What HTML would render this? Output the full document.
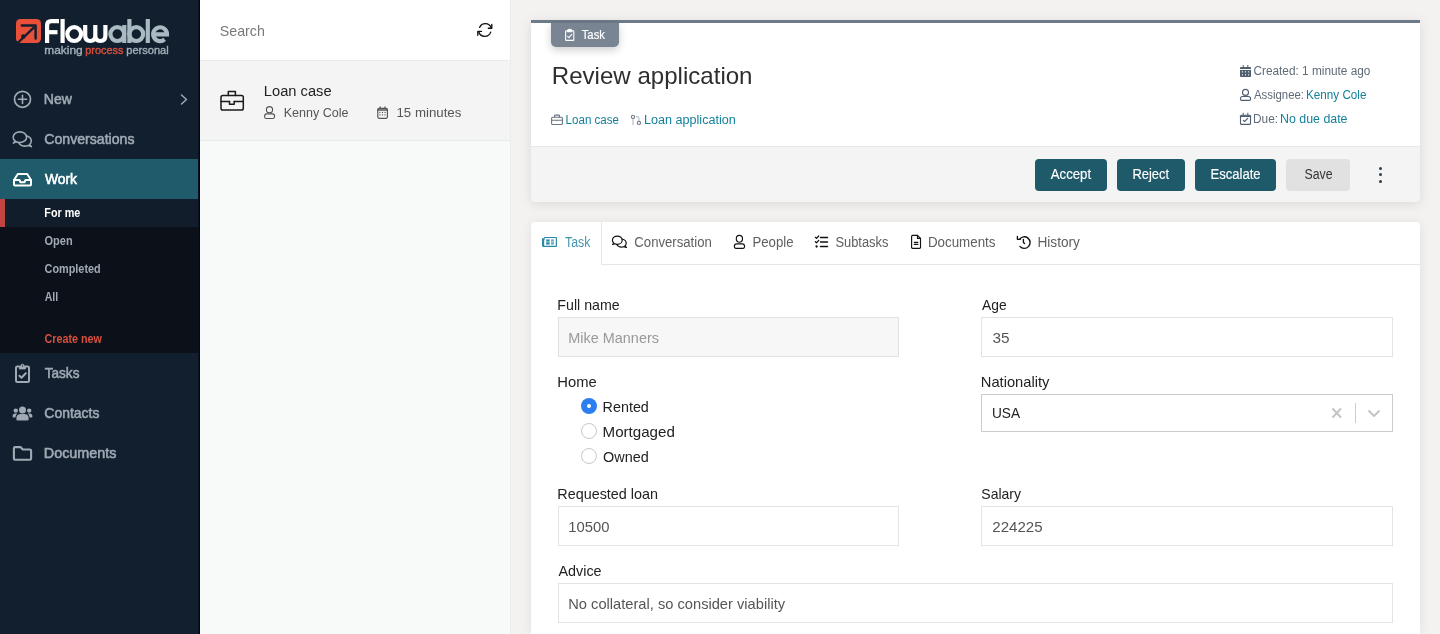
<!DOCTYPE html>
<html><head><meta charset="utf-8"><style>
html,body{margin:0;padding:0;width:1440px;height:634px;overflow:hidden;background:#f3f2f0}
body{position:relative;font-family:"Liberation Sans",sans-serif}
.r{position:absolute}
.t{position:absolute;white-space:nowrap;will-change:transform}
svg{position:absolute;overflow:visible}
</style></head><body>
<div class="r" style="left:0px;top:0px;width:198px;height:634px;background:#121f2e"></div>
<div class="r" style="left:198px;top:0px;width:1px;height:634px;background:#0a1222"></div>
<div class="r" style="left:199px;top:0px;width:1px;height:634px;background:#020616"></div>
<div class="r" style="left:0px;top:159px;width:198px;height:40px;background:#1f5b6b"></div>
<div class="r" style="left:0px;top:199px;width:198px;height:154px;background:#0c1119"></div>
<div class="r" style="left:0px;top:199px;width:198px;height:28px;background:#111d2b"></div>
<div class="r" style="left:0px;top:199px;width:5px;height:28px;background:#c0443f"></div>
<div class="r" style="left:200px;top:0px;width:310px;height:634px;background:#f8f9f9"></div>
<div class="r" style="left:200px;top:0px;width:310px;height:60px;background:#ffffff"></div>
<div class="r" style="left:200px;top:60px;width:310px;height:1px;background:#e7ebeb"></div>
<div class="r" style="left:200px;top:61px;width:310px;height:79px;background:#f4f4f4"></div>
<div class="r" style="left:200px;top:140px;width:310px;height:1px;background:#e7ebeb"></div>
<div class="r" style="left:510px;top:0px;width:1px;height:634px;background:#e9eded"></div>
<div class="r" style="left:511px;top:0px;width:929px;height:634px;background:#f3f2f0"></div>
<div class="r" style="left:531px;top:20px;width:889px;height:182px;background:#f4f4f4;border-radius:0 0 4px 4px;box-shadow:0 2px 12px rgba(0,0,0,0.10)"></div>
<div class="r" style="left:531px;top:23px;width:889px;height:123px;background:#ffffff"></div>
<div class="r" style="left:531px;top:20px;width:889px;height:3px;background:#6d7a88"></div>
<div class="r" style="left:531px;top:146px;width:889px;height:1px;background:#e6eaea"></div>
<div class="r" style="left:551px;top:23px;width:68px;height:24px;background:#7a8593;border-radius:0 0 5px 5px;box-shadow:0 3px 8px rgba(0,0,0,0.2)"></div>
<div class="r" style="left:1035px;top:159px;width:72px;height:32px;background:#1f5a6b;border-radius:4px"></div>
<div class="r" style="left:1117px;top:159px;width:68px;height:32px;background:#1f5a6b;border-radius:4px"></div>
<div class="r" style="left:1195px;top:159px;width:81px;height:32px;background:#1f5a6b;border-radius:4px"></div>
<div class="r" style="left:1286px;top:159px;width:64px;height:32px;background:#e1e1e1;border-radius:4px"></div>
<div class="r" style="left:1378.5px;top:166.5px;width:3px;height:3px;background:#2c3e50;border-radius:50%"></div>
<div class="r" style="left:1378.5px;top:173.0px;width:3px;height:3px;background:#2c3e50;border-radius:50%"></div>
<div class="r" style="left:1378.5px;top:179.5px;width:3px;height:3px;background:#2c3e50;border-radius:50%"></div>
<div class="r" style="left:531px;top:222px;width:889px;height:412px;background:#ffffff;border-radius:4px 4px 0 0;box-shadow:0 1px 12px rgba(0,0,0,0.08)"></div>
<div class="r" style="left:601px;top:222px;width:1px;height:42px;background:#e6e6e6"></div>
<div class="r" style="left:601px;top:264px;width:819px;height:1px;background:#e6e6e6"></div>
<div class="r" style="left:558px;top:317px;width:341px;height:40px;box-sizing:border-box;background:#f7f7f7;border:1px solid #e0e0e0"></div>
<div class="r" style="left:981px;top:317px;width:412px;height:40px;box-sizing:border-box;background:#fff;border:1px solid #e3e3e3"></div>
<div class="r" style="left:981px;top:394px;width:412px;height:38px;box-sizing:border-box;background:#fff;border:1px solid #cccccc"></div>
<div class="r" style="left:558px;top:506px;width:341px;height:40px;box-sizing:border-box;background:#fff;border:1px solid #e3e3e3"></div>
<div class="r" style="left:981px;top:506px;width:412px;height:40px;box-sizing:border-box;background:#fff;border:1px solid #e3e3e3"></div>
<div class="r" style="left:558px;top:583px;width:835px;height:40px;box-sizing:border-box;background:#fff;border:1px solid #e3e3e3"></div>
<div class="r" style="left:581px;top:398px;width:16px;height:16px;box-sizing:border-box;background:#2b7ff0;border-radius:50%"></div>
<div class="r" style="left:587px;top:404px;width:4px;height:4px;background:#fff;border-radius:50%"></div>
<div class="r" style="left:581px;top:423px;width:16px;height:16px;box-sizing:border-box;background:#fff;border:1px solid #c8c8c8;border-radius:50%"></div>
<div class="r" style="left:581px;top:448px;width:16px;height:16px;box-sizing:border-box;background:#fff;border:1px solid #c8c8c8;border-radius:50%"></div>
<svg style="left:0;top:0;will-change:transform" width="1440" height="634" font-family="Liberation Sans"><text x="43.83" y="104" font-size="14.5" fill="#a0aab5" textLength="28.17" lengthAdjust="spacingAndGlyphs" stroke="#a0aab5" stroke-width="0.55">New</text><text x="44.32" y="144" font-size="14.5" fill="#a0aab5" textLength="90.15" lengthAdjust="spacingAndGlyphs" stroke="#a0aab5" stroke-width="0.55">Conversations</text><text x="44.90" y="184" font-size="14.5" fill="#ffffff" textLength="32.06" lengthAdjust="spacingAndGlyphs" stroke="#ffffff" stroke-width="0.6">Work</text><text x="44.31" y="217" font-size="12.5" fill="#ffffff" font-weight="bold" textLength="36.10" lengthAdjust="spacingAndGlyphs">For me</text><text x="44.56" y="245" font-size="12.5" fill="#a0aab5" font-weight="bold" textLength="28.10" lengthAdjust="spacingAndGlyphs">Open</text><text x="44.57" y="273" font-size="12.5" fill="#a0aab5" font-weight="bold" textLength="56.12" lengthAdjust="spacingAndGlyphs">Completed</text><text x="44.75" y="301" font-size="12.5" fill="#a0aab5" font-weight="bold" textLength="13.49" lengthAdjust="spacingAndGlyphs">All</text><text x="44.57" y="343" font-size="12.5" fill="#d6503e" font-weight="bold" textLength="57.34" lengthAdjust="spacingAndGlyphs">Create new</text><text x="44.72" y="378" font-size="14.5" fill="#a0aab5" textLength="34.72" lengthAdjust="spacingAndGlyphs" stroke="#a0aab5" stroke-width="0.55">Tasks</text><text x="44.33" y="418" font-size="14.5" fill="#a0aab5" textLength="55.08" lengthAdjust="spacingAndGlyphs" stroke="#a0aab5" stroke-width="0.55">Contacts</text><text x="43.81" y="458" font-size="14.5" fill="#a0aab5" textLength="72.62" lengthAdjust="spacingAndGlyphs" stroke="#a0aab5" stroke-width="0.55">Documents</text><text x="44.20" y="54" font-size="10.5" fill="#a3afb8" textLength="38.53" lengthAdjust="spacingAndGlyphs" stroke="#a3afb8" stroke-width="0.35">making</text><text x="85.27" y="54" font-size="10.5" fill="#d8503f" textLength="38.10" lengthAdjust="spacingAndGlyphs" stroke="#d8503f" stroke-width="0.35">process</text><text x="126.26" y="54" font-size="10.5" fill="#a3afb8" textLength="42.45" lengthAdjust="spacingAndGlyphs" stroke="#a3afb8" stroke-width="0.35">personal</text><text x="219.81" y="36" font-size="14.5" fill="#7a7a7a" textLength="45.11" lengthAdjust="spacingAndGlyphs">Search</text><text x="263.86" y="96" font-size="15.5" fill="#222222" textLength="67.73" lengthAdjust="spacingAndGlyphs">Loan case</text><text x="283.78" y="117" font-size="13.5" fill="#555555" textLength="64.77" lengthAdjust="spacingAndGlyphs">Kenny Cole</text><text x="396.48" y="117" font-size="13" fill="#555555" textLength="64.92" lengthAdjust="spacingAndGlyphs">15 minutes</text><text x="581.73" y="39" font-size="12.5" fill="#ffffff" textLength="23.18" lengthAdjust="spacingAndGlyphs" stroke="#ffffff" stroke-width="0.2">Task</text><text x="551.79" y="84" font-size="24" fill="#2e2e2e" textLength="200.73" lengthAdjust="spacingAndGlyphs">Review application</text><text x="565.57" y="124" font-size="12.5" fill="#13809b" textLength="53.47" lengthAdjust="spacingAndGlyphs">Loan case</text><text x="643.99" y="124" font-size="12.5" fill="#13809b" textLength="91.76" lengthAdjust="spacingAndGlyphs">Loan application</text><text x="1253.43" y="75" font-size="12.5" fill="#5f6b78" textLength="117.03" lengthAdjust="spacingAndGlyphs">Created: 1 minute ago</text><text x="1254.00" y="99" font-size="12.5" fill="#5f6b78" textLength="50.00" lengthAdjust="spacingAndGlyphs">Assignee:</text><text x="1306.06" y="99" font-size="12.5" fill="#13809b" textLength="60.42" lengthAdjust="spacingAndGlyphs">Kenny Cole</text><text x="1253.05" y="123" font-size="12.5" fill="#5f6b78" textLength="24.99" lengthAdjust="spacingAndGlyphs">Due:</text><text x="1280.01" y="123" font-size="12.5" fill="#13809b" textLength="67.49" lengthAdjust="spacingAndGlyphs">No due date</text><text x="1050.80" y="179" font-size="14" fill="#ffffff" textLength="40.29" lengthAdjust="spacingAndGlyphs" stroke="#ffffff" stroke-width="0.15">Accept</text><text x="1132.49" y="179" font-size="14" fill="#ffffff" textLength="36.59" lengthAdjust="spacingAndGlyphs" stroke="#ffffff" stroke-width="0.15">Reject</text><text x="1210.47" y="179" font-size="14" fill="#ffffff" textLength="50.08" lengthAdjust="spacingAndGlyphs" stroke="#ffffff" stroke-width="0.15">Escalate</text><text x="1304.47" y="179" font-size="14" fill="#333333" textLength="28.06" lengthAdjust="spacingAndGlyphs">Save</text><text x="565.04" y="247" font-size="14" fill="#4596ae" textLength="25.25" lengthAdjust="spacingAndGlyphs">Task</text><text x="634.34" y="247" font-size="14" fill="#606060" textLength="77.49" lengthAdjust="spacingAndGlyphs">Conversation</text><text x="752.46" y="247" font-size="14" fill="#606060" textLength="41.10" lengthAdjust="spacingAndGlyphs">People</text><text x="835.45" y="247" font-size="14" fill="#606060" textLength="53.00" lengthAdjust="spacingAndGlyphs">Subtasks</text><text x="927.95" y="247" font-size="14" fill="#606060" textLength="67.53" lengthAdjust="spacingAndGlyphs">Documents</text><text x="1037.43" y="247" font-size="14" fill="#606060" textLength="42.53" lengthAdjust="spacingAndGlyphs">History</text><text x="557.33" y="310" font-size="14.5" fill="#222222" textLength="62.32" lengthAdjust="spacingAndGlyphs">Full name</text><text x="982.00" y="310" font-size="14.5" fill="#222222" textLength="24.67" lengthAdjust="spacingAndGlyphs">Age</text><text x="568.31" y="343" font-size="14.5" fill="#999999" textLength="90.65" lengthAdjust="spacingAndGlyphs">Mike Manners</text><text x="992.47" y="343" font-size="14.5" fill="#555555" textLength="17.09" lengthAdjust="spacingAndGlyphs">35</text><text x="557.28" y="387" font-size="14.5" fill="#222222" textLength="39.41" lengthAdjust="spacingAndGlyphs">Home</text><text x="980.78" y="387" font-size="14.5" fill="#222222" textLength="68.72" lengthAdjust="spacingAndGlyphs">Nationality</text><text x="602.61" y="412" font-size="14.5" fill="#222222" textLength="46.23" lengthAdjust="spacingAndGlyphs">Rented</text><text x="602.55" y="437" font-size="14.5" fill="#222222" textLength="72.31" lengthAdjust="spacingAndGlyphs">Mortgaged</text><text x="603.10" y="462" font-size="14.5" fill="#222222" textLength="45.74" lengthAdjust="spacingAndGlyphs">Owned</text><text x="991.96" y="418" font-size="14.5" fill="#222222" textLength="28.15" lengthAdjust="spacingAndGlyphs">USA</text><text x="557.31" y="499" font-size="14.5" fill="#222222" textLength="100.66" lengthAdjust="spacingAndGlyphs">Requested loan</text><text x="981.32" y="499" font-size="14.5" fill="#222222" textLength="39.68" lengthAdjust="spacingAndGlyphs">Salary</text><text x="568.38" y="532" font-size="14.5" fill="#555555" textLength="41.15" lengthAdjust="spacingAndGlyphs">10500</text><text x="992.27" y="532" font-size="14.5" fill="#555555" textLength="50.34" lengthAdjust="spacingAndGlyphs">224225</text><text x="558.50" y="576" font-size="14.5" fill="#222222" textLength="43.12" lengthAdjust="spacingAndGlyphs">Advice</text><text x="568.29" y="609" font-size="14.5" fill="#555555" textLength="216.78" lengthAdjust="spacingAndGlyphs">No collateral, so consider viability</text></svg>
<svg style="left:0;top:0" width="1440" height="634" viewBox="0 0 1440 634" fill="none" stroke-linecap="round" stroke-linejoin="round">
<!-- logo icon -->
<rect x="16" y="19" width="25" height="24" rx="4.5" fill="#e9503a"/>
<path d="M14,45 L17.5,41.5 L16,41.5 Z" fill="#121f2e"/>
<path d="M21.8,25.6 H35.6 V38.4" stroke="#121f2e" stroke-width="2.5" stroke-linecap="round"/>
<path d="M34.5,26.8 L14.5,46" stroke="#121f2e" stroke-width="2.3" stroke-linecap="butt"/>
<circle cx="23.3" cy="36.6" r="2.3" fill="#121f2e"/>
<!-- Flowable letters -->
<g stroke-width="4.2" stroke-linecap="butt" stroke-linejoin="miter">
<path d="M47.1,43 V25.3 Q47.1,21.1 51.3,21.1 H59" stroke="#ffffff"/>
<path d="M47.1,32.2 H57.5" stroke="#ffffff"/>
<path d="M62.6,19 V43" stroke="#ffffff"/>
<circle cx="74.2" cy="34.1" r="6.9" stroke="#ffffff"/>
<path d="M85.2,25 V35.5 Q85.2,41 90.3,41 Q95.3,41 95.3,35.5 V25 M95.3,35.5 Q95.3,41 100.4,41 Q105.4,41 105.4,35.5 V25" stroke="#ffffff"/>
<circle cx="117.3" cy="34.1" r="6.9" stroke="#aabac2"/>
<path d="M124.3,25 V43" stroke="#aabac2"/>
<path d="M129.4,19 V43" stroke="#aabac2"/>
<circle cx="136.3" cy="34.1" r="6.9" stroke="#aabac2"/>
<path d="M147.8,19 V43" stroke="#aabac2"/>
<path d="M153.3,34.3 H167 A6.9,6.9 0 1 0 164.6,39.4" stroke="#aabac2"/>
</g>
<!-- New plus circle -->
<circle cx="22.5" cy="99.3" r="8" stroke="#a0aab5" stroke-width="1.7"/>
<path d="M18.4,99.3 H26.6 M22.5,95.2 V103.4" stroke="#a0aab5" stroke-width="1.6"/>
<!-- chevron -->
<path d="M181.5,95 L186.5,99.5 L181.5,104" stroke="#a0aab5" stroke-width="1.5"/>
<!-- conversations -->
<g stroke="#a0aab5" stroke-width="1.6">
<path d="M15.4,141.2 C13.9,140.2 13.2,138.8 13.2,137.2 C13.2,134.2 16.2,131.9 19.9,131.9 C23.6,131.9 26.6,134.2 26.6,137.2 C26.6,140.2 23.6,142.5 19.9,142.5 C18.5,142.5 17.2,142.2 16.1,141.7 L13.4,143.1 Z"/>
<path d="M26.3,135.7 C29.2,136.4 31.3,138.5 31.3,141 C31.3,142.5 30.6,143.8 29.5,144.7 L31.4,146.6 L28.2,145.5 C27.3,145.9 26.2,146.1 25,146.1 C22.3,146.1 20,144.9 19.1,143.1"/>
</g>
<!-- work inbox -->
<g stroke="#ffffff" stroke-width="2">
<path d="M14,180 L17.8,174 H27.2 L31,180 V184.6 Q31,185.6 30,185.6 H15 Q14,185.6 14,184.6 Z"/>
<path d="M14,180 H19.5 L20.5,182.3 H24.5 L25.5,180 H31"/>
</g>
<!-- tasks clipboard -->
<g stroke="#a0aab5" stroke-width="2">
<path d="M19.2,366.6 H17.2 Q16,366.6 16,367.8 V380.8 Q16,382 17.2,382 H27.8 Q29,382 29,380.8 V367.8 Q29,366.6 27.8,366.6 H25.6"/>
<path d="M19.6,368.9 H25.4 V366.9 Q25.4,366.1 24.6,366.1 H24.2 Q24,364.2 22.5,364.2 Q21,364.2 20.8,366.1 H20.4 Q19.6,366.1 19.6,366.9 Z" fill="#a0aab5" stroke-width="1"/><circle cx="22.5" cy="365.9" r="0.55" fill="#121f2e" stroke="none"/>
<path d="M19.4,375.8 L21.5,377.8 L25.8,373.2" stroke-width="2"/>
</g>
<!-- contacts -->
<g fill="#a0aab5">
<circle cx="22.5" cy="410" r="3.5"/>
<path d="M16.4,419.2 V417.9 C16.4,415.6 18.2,414.1 20.5,414.1 H24.5 C26.8,414.1 28.6,415.6 28.6,417.9 V419.2 Q28.6,420.4 27.4,420.4 H17.6 Q16.4,420.4 16.4,419.2 Z"/>
<circle cx="15.8" cy="410.6" r="2.2"/>
<circle cx="29.2" cy="410.6" r="2.2"/>
<path d="M12.6,416.6 V416.1 C12.6,414.6 13.6,413.5 15.1,413.5 H17.4 C16.3,414.5 15.6,415.9 15.5,417.5 H13.5 Q12.6,417.5 12.6,416.6 Z"/>
<path d="M32.4,416.6 V416.1 C32.4,414.6 31.4,413.5 29.9,413.5 H27.6 C28.7,414.5 29.4,415.9 29.5,417.5 H31.5 Q32.4,417.5 32.4,416.6 Z"/>
</g>
<!-- documents folder -->
<path d="M13.9,458.8 V448.3 Q13.9,447.1 15.1,447.1 H20.5 L22.8,449.5 H29.9 Q31.1,449.5 31.1,450.7 V458.6 Q31.1,459.8 29.9,459.8 H15.1 Q13.9,459.8 13.9,458.8 Z" stroke="#a0aab5" stroke-width="2.1"/>
<!-- refresh -->
<g stroke="#111" stroke-width="1.35">
<path d="M479.6,27.4 A6.3,6.3 0 0 1 491.2,27.6"/>
<path d="M491.8,24.4 V28.2 H488.3"/>
<path d="M490.7,32.1 A6.3,6.3 0 0 1 478.7,31.8"/>
<path d="M477.8,35.3 V31.4 H481.5"/>
</g>
<!-- briefcase big -->
<g stroke="#1a1a1a" stroke-width="1.5">
<rect x="221" y="95.5" width="22.3" height="14.6" rx="1.8"/>
<path d="M228.3,95.5 V91.6 H235.4 V95.5"/>
<path d="M221,101.6 H229.5 M234.2,101.6 H243.3"/>
<path d="M229.5,101.6 V104.2 H234.2 V101.6"/>
</g>
<!-- person small list -->
<g stroke="#555" stroke-width="1.15">
<circle cx="269.5" cy="109.7" r="3.1"/>
<path d="M266.6,113.9 H272.4 Q274.6,113.9 274.6,116.6 Q274.6,118.5 273,118.5 H266 Q264.6,118.5 264.6,116.6 Q264.6,113.9 266.6,113.9 Z"/>
</g>
<!-- calendar list -->
<g stroke="#555">
<rect x="377.8" y="108.4" width="9.6" height="9.9" rx="1.2" stroke-width="1.15"/>
<path d="M377.8,109.9 H387.4" stroke-width="1.5"/>
<path d="M380.2,106.6 V108.6 M385,106.6 V108.6" stroke-width="1.2" stroke-linecap="butt"/>
</g>
<g fill="#555">
<rect x="379.4" y="111.9" width="1.1" height="1.1"/><rect x="381.95" y="111.9" width="1.1" height="1.1"/><rect x="384.5" y="111.9" width="1.1" height="1.1"/>
<rect x="379.4" y="114.3" width="1.1" height="1.1"/><rect x="381.95" y="114.3" width="1.1" height="1.1"/><rect x="384.5" y="114.3" width="1.1" height="1.1"/>
</g>
<!-- badge clipboard -->
<g stroke="#ffffff" stroke-width="1.1">
<path d="M567.4,30.8 H566.3 Q565.6,30.8 565.6,31.5 V39.7 Q565.6,40.4 566.3,40.4 H573.1 Q573.8,40.4 573.8,39.7 V31.5 Q573.8,30.8 573.1,30.8 H572"/>
<path d="M567.6,31.8 V30.6 Q567.6,29.3 569.7,29.3 Q571.8,29.3 571.8,30.6 V31.8 Z" fill="#ffffff"/>
<path d="M567.6,36.4 L568.9,37.6 L571.8,34.4"/>
</g>
<!-- small briefcase -->
<g stroke="#6b7784" stroke-width="1.1">
<rect x="551.6" y="117.2" width="10.8" height="7.3" rx="1"/>
<path d="M554.6,117.2 V115.6 Q554.6,115.1 555.1,115.1 H558.9 Q559.4,115.1 559.4,115.6 V117.2"/>
<path d="M551.6,120.3 H562.4"/>
</g>
<path d="M556,120.6 H558 L557,121.6 Z" fill="#6b7784"/>
<!-- process icon -->
<path d="M633,118.6 V124.6" stroke="#b9c0c7" stroke-width="1.2"/>
<path d="M636.4,116.6 H637.4 Q638.9,116.6 638.9,118.1 V121.2" stroke="#b9c0c7" stroke-width="1.2"/>
<circle cx="633" cy="116.9" r="1.6" stroke="#6b7784" stroke-width="1.1"/>
<circle cx="638.9" cy="122.9" r="1.6" stroke="#6b7784" stroke-width="1.1"/>
<!-- meta calendar filled -->
<g fill="#4f5f6f">
<path d="M1240,68 Q1240,67 1241,67 H1250 Q1251,67 1251,68 V69 H1240 Z"/>
<path d="M1240,70 H1251 V76 Q1251,77 1250,77 H1241 Q1240,77 1240,76 Z"/>
<rect x="1242.7" y="65" width="1" height="2.2"/><rect x="1247.3" y="65" width="1" height="2.2"/>
</g>
<g fill="#ffffff">
<rect x="1241.9" y="71.3" width="1.1" height="1.1"/><rect x="1245" y="71.3" width="1.1" height="1.1"/><rect x="1248.1" y="71.3" width="1.1" height="1.1"/>
<rect x="1241.9" y="74.3" width="1.1" height="1.1"/><rect x="1245" y="74.3" width="1.1" height="1.1"/><rect x="1248.1" y="74.3" width="1.1" height="1.1"/>
</g>
<!-- meta person -->
<g stroke="#4f5f6f" stroke-width="1.1">
<circle cx="1245.5" cy="92.4" r="3"/>
<path d="M1242.6,96.5 H1248.4 Q1250.6,96.5 1250.6,99 Q1250.6,100.4 1249.3,100.4 H1241.7 Q1240.4,100.4 1240.4,99 Q1240.4,96.5 1242.6,96.5 Z"/>
</g>
<!-- meta calendar check -->
<g stroke="#4f5f6f" stroke-width="1.1">
<rect x="1240.5" y="115.2" width="10" height="9.2" rx="1"/>
<path d="M1240.5,116.2 H1250.5" stroke-width="1.5"/>
<path d="M1243.2,113.2 V115 M1247.8,113.2 V115" stroke-width="1"/>
<path d="M1243.2,120.3 L1244.6,121.5 L1247.7,118.4"/>
</g>
<!-- tab task icon -->
<g stroke="#2a8aa6" stroke-width="1.2">
<path d="M544.6,237.5 H556 Q556.4,237.5 556.4,237.9 V245.9 Q556.4,246.4 556,246.4 H543.5 Q542.6,246.4 542.6,245.5 V238.8 H544.6"/>
<path d="M543.6,238.8 V246"/>
</g>
<g fill="#2a8aa6">
<rect x="546.2" y="239.4" width="3.4" height="2.2"/>
<rect x="546.2" y="242.2" width="3.4" height="2.4"/>
<rect x="551" y="239.4" width="3" height="2.2" opacity="0.7"/>
<rect x="551" y="242.2" width="3" height="2.4" opacity="0.7"/>
</g>
<!-- tab conversation -->
<g stroke="#111" stroke-width="1.2">
<path d="M613.9,243.2 C613,242.4 612.4,241.4 612.4,240.2 C612.4,237.9 614.6,236.1 617.3,236.1 C620,236.1 622.2,237.9 622.2,240.2 C622.2,242.5 620,244.3 617.3,244.3 C616.3,244.3 615.4,244.1 614.7,243.8 L612.6,244.5 Z"/>
<path d="M622.1,239 C624.5,239.5 626.2,241.2 626.2,243.2 C626.2,244.3 625.7,245.2 624.9,246 L626.4,247.5 L623.7,246.7 C623,247 622.2,247.1 621.4,247.1 C619.3,247.1 617.6,246.2 616.8,244.6"/>
</g>
<!-- tab person -->
<g stroke="#111" stroke-width="1.15">
<ellipse cx="739.4" cy="238.8" rx="3.1" ry="3.4"/>
<path d="M736.8,243.8 H742.2 Q744.6,243.8 744.6,246.6 Q744.6,248.3 743.2,248.3 H735.7 Q734.3,248.3 734.3,246.6 Q734.3,243.8 736.8,243.8 Z"/>
</g>
<!-- subtasks -->
<g stroke="#111">
<path d="M815.4,237.3 L816.5,238.4 L818.7,236 M815.4,241.7 L816.5,242.8 L818.7,240.4" stroke-width="1.25"/>
<path d="M820.5,237.5 H827.5 M820.5,242 H827.5 M820.5,246.5 H827.5" stroke-width="1.5"/>
</g>
<circle cx="816.6" cy="246.5" r="1.15" fill="#111"/>
<!-- document -->
<g stroke="#111" stroke-width="1.15">
<path d="M917.5,235.4 H912.6 Q911.6,235.4 911.6,236.4 V247.6 Q911.6,248.4 912.6,248.4 H919.6 Q920.5,248.4 920.5,247.6 V238.4 Z"/>
<path d="M917.5,235.4 V238.4 H920.5"/>
<path d="M914.3,242.3 H917.9 M914.3,244.4 H917.9"/>
</g>
<!-- history -->
<g stroke="#111" stroke-width="1.35">
<path d="M1019.5,239.3 A5.8,5.8 0 1 1 1019.9,246.4"/>
<path d="M1017.4,236.4 V239.3 H1020.3"/>
<path d="M1023.4,239.3 V242.5 L1024.6,243.6"/>
</g>
<!-- select x / chevron -->
<path d="M1333,409 L1340.5,417 M1340.5,409 L1333,417" stroke="#c4c4c4" stroke-width="2"/>
<path d="M1355.5,403 V423" stroke="#cccccc" stroke-width="1" stroke-linecap="butt"/>
<path d="M1369,411 L1374,416 L1379,411" stroke="#c4c4c4" stroke-width="1.9"/>
</svg>

</body></html>
